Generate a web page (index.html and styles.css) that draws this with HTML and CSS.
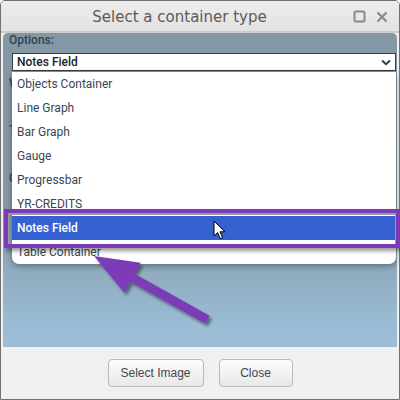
FILE: index.html
```html
<!DOCTYPE html>
<html>
<head>
<meta charset="utf-8">
<link rel="stylesheet" href="styles.css">
</head>
<body>
<div class="dialog">
  <div class="titlebar">
    <div class="title">Select a container type</div>
    <div class="win-icons">
      <svg width="14" height="14" viewBox="0 0 14 14"><rect x="1.5" y="1.5" width="10" height="10" rx="1" fill="none" stroke="#8a8a8a" stroke-width="2"/></svg>
      <svg width="12" height="12" viewBox="0 0 12 12"><path d="M1.5 1.5 L10.5 10.5 M10.5 1.5 L1.5 10.5" stroke="#8a8a8a" stroke-width="2.2" fill="none"/></svg>
    </div>
  </div>
  <div class="content">
    <div class="label">Options:</div>
    <div class="field">
      <div class="select">
        <span>Notes Field</span>
        <svg class="chev" width="10" height="7" viewBox="0 0 10 7"><path d="M1 1.5 L5 5.2 L9 1.5" fill="none" stroke="#2f3b45" stroke-width="2"/></svg>
      </div>
      <ul class="dropdown">
        <li>Objects Container</li>
        <li>Line Graph</li>
        <li>Bar Graph</li>
        <li>Gauge</li>
        <li>Progressbar</li>
        <li>YR-CREDITS</li>
        <li class="active">Notes Field</li>
        <li>Table Container</li>
      </ul>
    </div>
    <div class="label row first"><span class="peek">W</span></div>
    <div class="label row"><span class="peek">T</span></div>
    <div class="label row third"><span class="peek">C</span></div>
  </div>
  <div class="footer">
    <button class="btn btn-wide">Select Image</button>
    <button class="btn btn-close">Close</button>
  </div>
</div>
<div class="annot-box"></div>
<svg class="annot-arrow" width="400" height="400" viewBox="0 0 400 400">
  <defs>
    <filter id="sh" x="-20%" y="-20%" width="140%" height="140%">
      <feDropShadow dx="2.5" dy="3" stdDeviation="1.6" flood-color="#000" flood-opacity="0.45"/>
    </filter>
  </defs>
  <polygon filter="url(#sh)" fill="#7b3bb7" points="94,256 140.7,262.8 134.6,273.7 209.6,315.8 205.2,323.6 130.2,281.5 124.1,292.4"/>
</svg>
<svg class="cursor" width="14" height="20" viewBox="0 0 14 20">
  <path d="M1 1 L1 16 L4.6 12.6 L7.3 18.6 L9.6 17.6 L7 11.8 L12 11.8 Z" fill="#fff" stroke="#000" stroke-width="1" stroke-linejoin="miter"/>
</svg>
</body>
</html>
```

FILE: styles.css
```css
html, body {
  margin: 0;
  padding: 0;
}
body {
  width: 400px;
  height: 400px;
  overflow: hidden;
  position: relative;
  background: #ffffff;
  font-family: Roboto, "Noto Sans", sans-serif;
}
.dialog {
  box-sizing: border-box;
  width: 400px;
  height: 400px;
  border: 1px solid #707070;
  border-radius: 5px 5px 0 0;
  background: #f0f0f0;
  display: flex;
  flex-direction: column;
  overflow: hidden;
}
.titlebar {
  height: 30px;
  flex: none;
  background: linear-gradient(#ededed, #e2e2e2);
  border-bottom: 2px solid #cbcbcb;
  display: flex;
  align-items: center;
}
.title {
  width: 357px;
  text-align: center;
  font-family: "DejaVu Sans", Verdana, sans-serif;
  font-size: 15px;
  color: #5a5a5a;
  padding-top: 1px;
}
.win-icons {
  display: flex;
  align-items: center;
  gap: 9px;
  margin-left: -5px;
  padding-top: 1px;
}
.content {
  flex: 1;
  margin: 0 2px 0 2px;
  padding: 0 1px 0 6px;
  border-radius: 5px 5px 0 0;
  background: linear-gradient(#8497a5 0%, #8599a8 55%, #8fabbf 75%, #9abbd3 92%, #9cbed6 100%);
}
.label {
  font-size: 12px;
  line-height: 14px;
  color: #34424e;
  font-weight: 500;
}
.row {
  margin-top: 33px;
  width: 4px;
  overflow: hidden;
}
.row.first {
  margin-top: 5px;
}
.row.third {
  margin-top: 34px;
}
.peek {
  display: block;
  width: 4px;
  overflow: hidden;
}
.field {
  position: relative;
  margin: 6px 0 0 3px;
}
.select {
  box-sizing: border-box;
  height: 18px;
  border: 1px solid #3c3c3c;
  background: #fff;
  display: flex;
  align-items: center;
  justify-content: space-between;
  padding: 0 4px 0 4px;
  font-size: 12px;
  font-weight: 500;
  color: #222;
}
.dropdown {
  position: absolute;
  top: calc(100% + 1px);
  left: 0;
  right: 0;
  margin: 0;
  padding: 0;
  list-style: none;
  background: #fff;
  border-radius: 0 0 7px 7px;
  box-shadow: 0 2px 6px rgba(0, 0, 0, 0.35);
  z-index: 2;
}
.dropdown li {
  height: 24px;
  line-height: 24px;
  padding-left: 5px;
  font-size: 12px;
  color: #3a4654;
}
.dropdown li.active {
  background: #3661d0;
  color: #fff;
  font-weight: 500;
}
.footer {
  height: 52px;
  flex: none;
  display: flex;
  justify-content: center;
  align-items: flex-start;
  gap: 15px;
  padding-top: 12px;
  box-sizing: border-box;
}
.btn {
  height: 28px;
  border: 1px solid #b9b9b9;
  border-radius: 4px;
  background: linear-gradient(#fdfdfd, #e8e8e8);
  font-family: "Liberation Sans", Arial, sans-serif;
  font-size: 12px;
  color: #454545;
  padding: 0;
}
.btn-wide {
  width: 96px;
}
.btn-close {
  width: 74px;
}
.annot-box {
  position: absolute;
  left: 4px;
  top: 209px;
  width: 396px;
  height: 39px;
  box-sizing: border-box;
  border: 4px solid #7b3bb7;
  box-shadow: inset 0 1px 0 1px #9a9a9a, 2px 3px 4px rgba(0, 0, 0, 0.4);
  z-index: 5;
}
.annot-arrow {
  position: absolute;
  left: 0;
  top: 0;
  z-index: 6;
  pointer-events: none;
}
.cursor {
  position: absolute;
  left: 213px;
  top: 220px;
  z-index: 7;
}
```
